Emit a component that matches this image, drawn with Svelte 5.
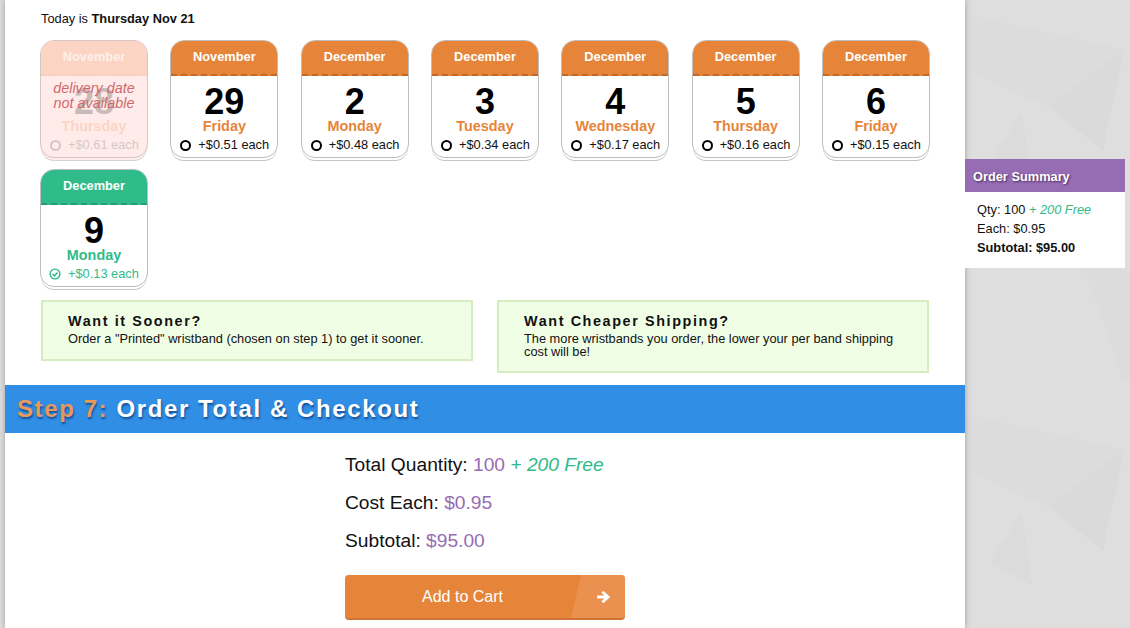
<script>
  const cards = [
    { month: 'November', day: 28, name: 'Thursday', price: '+$0.61 each', state: 'off' },
    { month: 'November', day: 29, name: 'Friday', price: '+$0.51 each', state: '' },
    { month: 'December', day: 2, name: 'Monday', price: '+$0.48 each', state: '' },
    { month: 'December', day: 3, name: 'Tuesday', price: '+$0.34 each', state: '' },
    { month: 'December', day: 4, name: 'Wednesday', price: '+$0.17 each', state: '' },
    { month: 'December', day: 5, name: 'Thursday', price: '+$0.16 each', state: '' },
    { month: 'December', day: 6, name: 'Friday', price: '+$0.15 each', state: '' },
    { month: 'December', day: 9, name: 'Monday', price: '+$0.13 each', state: 'sel' }
  ];
  const tiles = [-400, 0, 400];
</script>

<div class="page">
  <svg class="bg" viewBox="0 0 1130 628" preserveAspectRatio="none" aria-hidden="true">
    {#each tiles as y}
      <g transform="translate(0 {y})">
        <polygon points="965,14 1124,50 1103,150 1048,107 965,70" fill="#dcdcdc" />
        <polygon points="1048,107 1124,50 1103,150" fill="#dadada" />
        <polygon points="990,162 1022,112 1032,185" fill="#dbdbdb" />
        <polygon points="1085,270 1130,270 1130,380 1123,380" fill="#dcdcdc" />
      </g>
    {/each}
  </svg>
  <div class="edge"></div>
  <main>
    <p class="today">Today is <b>Thursday Nov 21</b></p>
    <div class="cards">
      {#each cards as c}
        <div class="card {c.state}">
          <div class="month">{c.month}</div>
          <div class="body">
            <div class="day">{c.day}</div>
            <div class="name">{c.name}</div>
            <div class="price">
              {#if c.state === 'sel'}
                <svg class="radio" viewBox="0 0 12 12" aria-hidden="true">
                  <circle cx="6" cy="6" r="4.9" fill="none" stroke="currentColor" stroke-width="1.4" />
                  <path d="M3.6 6.1 5.4 7.9 8.5 4.4" fill="none" stroke="currentColor" stroke-width="1.5" />
                </svg>
              {:else}
                <span class="dot"></span>
              {/if}
              <span>{c.price}</span>
            </div>
            {#if c.state === 'off'}
              <div class="na">delivery date<br />not available</div>
            {/if}
          </div>
        </div>
      {/each}
    </div>
    <div class="notes">
      <div class="note">
        <h4>Want it Sooner?</h4>
        <p>Order a "Printed" wristband (chosen on step 1) to get it sooner.</p>
      </div>
      <div class="note">
        <h4>Want Cheaper Shipping?</h4>
        <p>The more wristbands you order, the lower your per band shipping cost will be!</p>
      </div>
    </div>
    <h2 class="step"><span>Step 7:</span> Order Total &amp; Checkout</h2>
    <div class="total">
      <p>Total Quantity: <span class="pu">100</span> <i class="gr">+ 200 Free</i></p>
      <p>Cost Each: <span class="pu">$0.95</span></p>
      <p>Subtotal: <span class="pu">$95.00</span></p>
      <button type="button">
        <span class="lab">Add to Cart</span>
        <span class="arrow">
          <svg viewBox="0 0 14 14" aria-hidden="true">
            <path d="M1 5.6H7.2L4.8 3.2 6.4 1.5 12.4 7 6.4 12.5 4.8 10.8 7.2 8.4H1Z" fill="#fff" />
          </svg>
        </span>
      </button>
    </div>
  </main>
  <aside>
    <div class="sum">
      <div class="sum-h">Order Summary</div>
      <div class="sum-b">
        <div>Qty: 100 <i class="gr">+ 200 Free</i></div>
        <div>Each: $0.95</div>
        <div><b>Subtotal: $95.00</b></div>
      </div>
    </div>
  </aside>
</div>

<style>
  :global(body) { margin: 0; }
  .page {
    position: relative;
    display: flex;
    width: 1130px;
    height: 628px;
    overflow: hidden;
    background: #dedede;
    font-family: "Liberation Sans", Arial, sans-serif;
    color: #111;
  }
  .bg { position: absolute; inset: 0; width: 100%; height: 100%; }
  .edge { width: 5px; flex: none; }
  main {
    position: relative;
    width: 960px;
    flex: none;
    background: #fff;
    box-shadow: 0 0 6px rgba(0, 0, 0, .3);
  }
  .today { margin: 0; padding: 11px 0 0 36px; height: 40px; box-sizing: border-box; font-size: 12.8px; line-height: 15px; }
  .cards {
    display: grid;
    grid-template-columns: repeat(7, 108px);
    justify-content: space-between;
    row-gap: 11px;
    margin: 0 35px;
  }
  .card {
    --c: #e6853a;
    --d: #bd6a2d;
    height: 118px;
    box-sizing: border-box;
    border-radius: 14px;
    border: 1px solid #bdbdbd;
    box-shadow: 0 3px 0 -1px #fff, 0 4px 0 -1px #c4c4c4;
    overflow: hidden;
    background: #fff;
  }
  .month {
    height: 35px;
    box-sizing: border-box;
    background: var(--c);
    color: #fff;
    font-size: 12.8px;
    font-weight: 700;
    line-height: 15px;
    padding-top: 8px;
    text-align: center;
    border-bottom: 2px dashed var(--d);
  }
  .body { position: relative; height: 82px; text-align: center; }
  .day { font-size: 36px; font-weight: 700; line-height: 38px; padding-top: 7px; color: #000; }
  .name { font-size: 14.4px; font-weight: 700; line-height: 16px; margin-top: -3px; color: var(--c); }
  .price {
    display: flex;
    align-items: center;
    gap: 7px;
    padding-left: 9px;
    margin-top: 3px;
    font-size: 12.8px;
    line-height: 16px;
    white-space: nowrap;
    color: #111;
  }
  .dot { width: 11px; height: 11px; box-sizing: border-box; border: 2px solid #000; border-radius: 50%; flex: none; }
  .radio { width: 12px; height: 12px; flex: none; margin-left: -1px; }
  .sel { --c: #30bb8a; --d: #299c74; }
  .sel .price { color: #30bb8a; }
  .off { --c: #fbd4c4; --d: #f8cfbe; border-color: #d5c5c3; box-shadow: 0 3px 0 -1px #ffeeec, 0 4px 0 -1px #d8d0cf; background: #ffecea; }
  .off .month { color: #fdf0ea; }
  .off .day { color: #c9bab8; }
  .off .price { color: #d5c8c6; }
  .off .dot { border-color: #d5c5c3; }
  .na {
    position: absolute;
    inset: 5px 0 auto 0;
    font-size: 14.4px;
    font-style: italic;
    line-height: 15px;
    color: #d0686a;
  }
  .notes {
    display: grid;
    grid-template-columns: 432px 432px;
    justify-content: space-between;
    align-items: start;
    margin: 13px 36px 0;
  }
  .note {
    border: 2px solid #d6ecc2;
    background: #f1fee6;
    padding: 11px 24px 6px 25px;
    box-sizing: border-box;
  }
  .note:first-child { height: 61px; }
  .note:last-child { height: 73px; }
  .note h4 { margin: 0; font-size: 14.4px; line-height: 16px; font-weight: 700; letter-spacing: 1.6px; color: #111; }
  .note p { margin: 3px 0 0; font-size: 12.8px; line-height: 13px; color: #111; }
  .step {
    margin: 12px 0 0;
    height: 48px;
    background: #318ee5;
    color: #fff;
    font-size: 24px;
    font-weight: 700;
    line-height: 48px;
    padding-left: 12px;
    letter-spacing: 1.6px;
    text-shadow: 1px 2px 2px rgba(0, 40, 100, .6);
  }
  .step span { color: #e8995a; }
  .total { padding: 21px 0 0 340px; }
  .total p { margin: 0 0 17px; font-size: 19.2px; line-height: 21px; color: #111; }
  .pu { color: #966cb3; }
  .gr { color: #30bb8a; }
  button {
    display: block;
    position: relative;
    width: 280px;
    height: 45px;
    margin-top: 24px;
    padding: 0 45px 0 0;
    border: 0;
    border-bottom: 2px solid #cc7433;
    border-radius: 4px;
    background: #e6853a;
    color: #fff;
    font: 16px "Liberation Sans", Arial, sans-serif;
    overflow: hidden;
  }
  .lab { display: block; text-align: center; line-height: 42px; }
  .arrow {
    position: absolute;
    right: 0;
    top: 0;
    bottom: 0;
    width: 54px;
    background: #ea9150;
    clip-path: polygon(10px 0, 100% 0, 100% 100%, 0 100%);
    display: flex;
    align-items: center;
    justify-content: flex-end;
    padding-right: 13px;
    box-sizing: border-box;
  }
  .arrow svg { width: 16px; height: 16px; }
  aside { position: relative; width: 160px; padding-top: 159px; flex: none; }
  .sum { background: #fff; height: 109px; }
  .sum-h {
    height: 33px;
    background: #966cb3;
    color: #fff;
    font-size: 12.8px;
    font-weight: 700;
    line-height: 35px;
    padding-left: 8px;
    text-shadow: 1px 1px 2px rgba(40, 20, 60, .7);
  }
  .sum-b { padding: 8px 0 0 12px; font-size: 12.8px; line-height: 19px; color: #111; }
</style>
